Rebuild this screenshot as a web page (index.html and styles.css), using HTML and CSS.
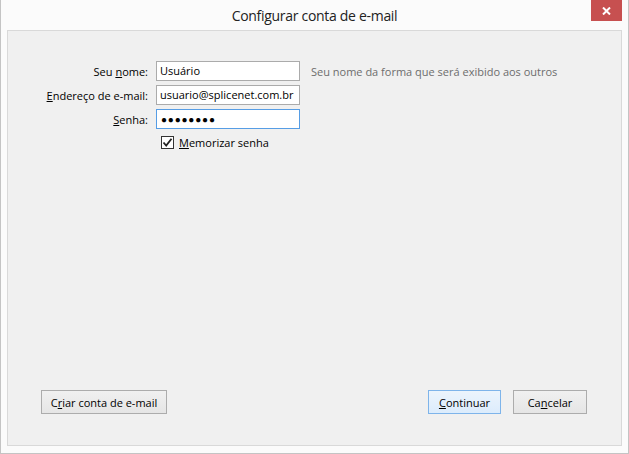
FILE: index.html
```html
<!DOCTYPE html>
<html lang="pt-BR">
<head>
<meta charset="utf-8">
<title>Configurar conta de e-mail</title>
<link rel="stylesheet" href="styles.css">
</head>
<body>
<div class="window">
  <div class="titlebar">
    <span class="title">Configurar conta de e-mail</span>
    <span class="close" aria-label="Fechar">
      <svg width="9" height="8" viewBox="0 0 9 8"><path d="M1 0.5 L8 7.5 M8 0.5 L1 7.5" stroke="#fff" stroke-width="2" fill="none"/></svg>
    </span>
  </div>
  <div class="panel">
    <div class="form">
      <label class="label">Seu <u>n</u>ome:</label>
      <div class="field">Usuário</div>
      <div class="hint">Seu nome da forma que será exibido aos outros</div>

      <label class="label"><u>E</u>ndereço de e-mail:</label>
      <div class="field">usuario@splicenet.com.br</div>
      <div></div>

      <label class="label"><u>S</u>enha:</label>
      <div class="field focused"><span class="dots">●●●●●●●●</span></div>
      <div></div>

      <div></div>
      <div class="check-row">
        <span class="checkbox"><svg width="11" height="11" viewBox="0 0 11 11"><path d="M1.5 5.5 L4.2 8.5 L9.5 1.8" stroke="#222" stroke-width="1.8" fill="none"/></svg></span>
        <span class="check-label"><u>M</u>emorizar senha</span>
      </div>
      <div></div>
    </div>
    <div class="footer">
      <button class="btn btn-create">C<u>r</u>iar conta de e-mail</button>
      <div class="spacer"></div>
      <button class="btn btn-default"><u>C</u>ontinuar</button>
      <button class="btn btn-cancel">Ca<u>n</u>celar</button>
    </div>
  </div>
</div>
</body>
</html>
```
FILE: styles.css
```css
html, body {
  margin: 0;
  padding: 0;
  background: #ffffff;
}
body {
  font-family: "Open Sans", "Noto Sans", sans-serif;
  font-size: 11px;
  color: #000;
}
.window {
  width: 629px;
  height: 454px;
  box-sizing: border-box;
  background: #fbfbfb;
  border-left: 1px solid #c4c4c4;
  border-right: 1px solid #c4c4c4;
  border-bottom: 1px solid #c4c4c4;
  padding: 0 6px 7px 6px;
  display: flex;
  flex-direction: column;
}
.titlebar {
  height: 30px;
  flex: 0 0 30px;
  position: relative;
  display: flex;
  justify-content: center;
  align-items: flex-start;
}
.title {
  font-size: 14px;
  letter-spacing: -0.3px;
  color: #222;
  line-height: 20px;
  padding-top: 6px;
}
.close {
  position: absolute;
  top: 0;
  right: 0;
  width: 31px;
  height: 21px;
  background: #c75050;
  display: flex;
  align-items: center;
  justify-content: center;
}
.panel {
  flex: 1;
  background: #f0f0f0;
  border: 1px solid #d9d9d9;
  display: flex;
  flex-direction: column;
}
.form {
  display: grid;
  grid-template-columns: 140px 144px auto;
  column-gap: 8px;
  row-gap: 4px;
  padding-top: 30px;
  align-items: center;
}
.form .hint {
  margin-left: 3px;
  color: #6d6d6d;
}
.label {
  text-align: right;
  white-space: nowrap;
}
.field {
  height: 20px;
  box-sizing: border-box;
  border: 1px solid #ababab;
  background: #fff;
  padding: 0 3px;
  line-height: 18px;
  white-space: nowrap;
  overflow: hidden;
}
.field.focused {
  border-color: #569de5;
}
.dots {
  font-size: 10px;
  letter-spacing: 0.8px;
  vertical-align: top;
  padding-left: 1px;
}
.check-row {
  display: flex;
  align-items: center;
  padding-left: 5px;
  height: 18px;
}
.checkbox {
  width: 13px;
  height: 13px;
  box-sizing: border-box;
  border: 1px solid #333;
  background: #fff;
  display: flex;
  align-items: center;
  justify-content: center;
  margin-right: 5px;
}
.footer {
  margin-top: auto;
  display: flex;
  align-items: center;
  padding: 0 34px 31px 33px;
  gap: 12px;
}
.spacer {
  flex: 1;
}
.btn {
  font-family: inherit;
  font-size: 11px;
  height: 24px;
  box-sizing: border-box;
  border: 1px solid #acacac;
  background: linear-gradient(#f0f0f0, #e5e5e5);
  color: #000;
  padding: 0 4px;
  margin: 0;
  white-space: nowrap;
}
.btn-create { width: 126px; }
.btn-default {
  width: 73px;
  border-color: #7eb4ea;
  background: linear-gradient(#ecf4fc, #dcecfc);
}
.btn-cancel { width: 74px; }
u {
  text-decoration: underline;
  text-underline-offset: 1px;
}
```
